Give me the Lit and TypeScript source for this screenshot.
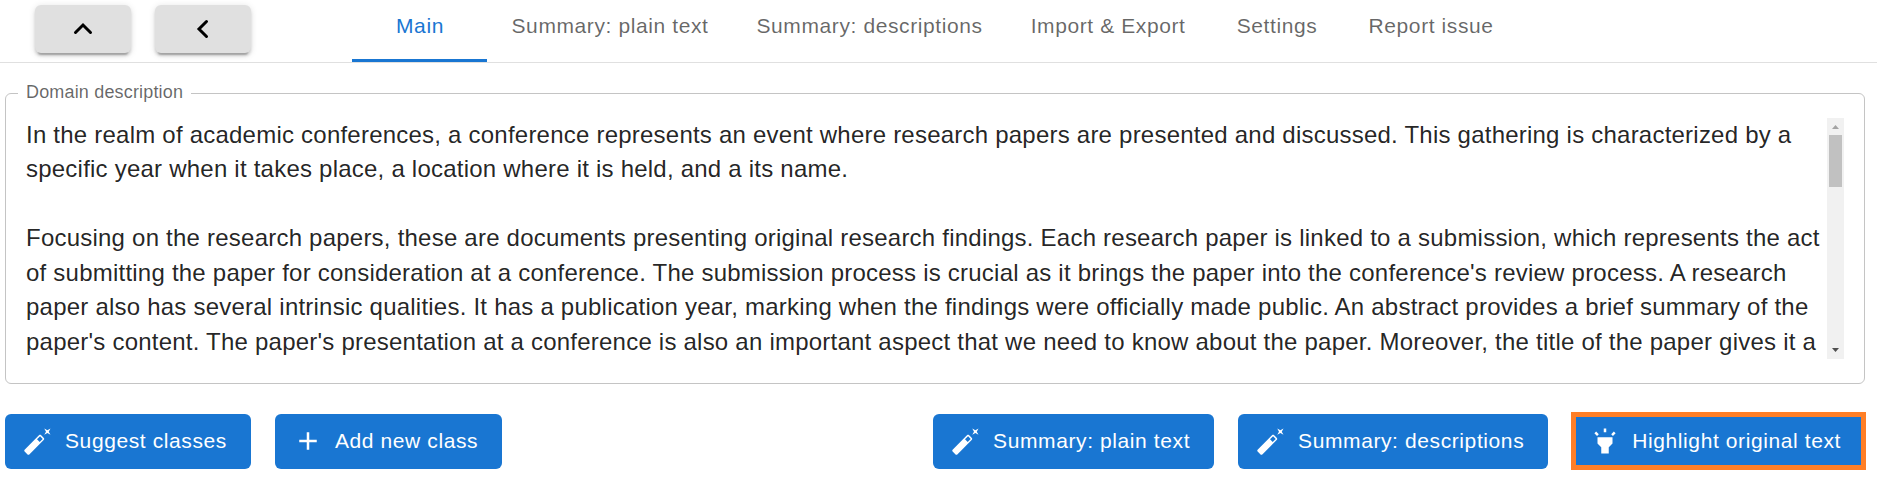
import { LitElement, html, css, svg } from "lit";
import { customElement, property } from "lit/decorators.js";

const ICONS: Record<string, string> = {
  wand: "m22 2-2.5 1.4L17 2l1.4 2.5L17 7l2.5-1.4L22 7l-1.4-2.5zm-7.63 5.29c-.39-.39-1.02-.39-1.41 0L1.29 18.96c-.39.39-.39 1.02 0 1.41l2.34 2.34c.39.39 1.02.39 1.41 0L16.7 11.05c.39-.39.39-1.02 0-1.41zm-1.03 5.49-2.12-2.12 2.44-2.44 2.12 2.12z",
  add: "M19 13h-6v6h-2v-6H5v-2h6V5h2v6h6z",
  torch: "m6 14 3 3v5h6v-5l3-3V9H6zm5-12h2v3h-2zM3.5 5.875 4.914 4.46l2.12 2.122L5.62 7.997zm13.46.71 2.123-2.12 1.414 1.414L18.375 8z",
};

@customElement("action-button")
class ActionButton extends LitElement {
  @property() icon = "wand";
  static styles = css`
    :host { display: block; }
    .button {
      display: flex; align-items: center; box-sizing: border-box; height: 55px;
      padding: 0 24px 0 18px; border: 0; border-radius: 6px; background: #1976d2; color: #fff;
      font: 400 21px/36.75px "Liberation Sans", Arial, sans-serif; letter-spacing: 0.6px; white-space: nowrap;
    }
    .icon { width: 30px; height: 30px; margin: 0 12px 1px 0; fill: currentColor; }
  `;
  render() {
    return html`<button class="button">
      <svg class="icon" viewBox="0 0 24 24">${svg`<path fill-rule="evenodd" d=${ICONS[this.icon]}></path>`}</svg><slot></slot>
    </button>`;
  }
}

const TABS = ["Main", "Summary: plain text", "Summary: descriptions", "Import & Export", "Settings", "Report issue"];

const LINES = [
  "In the realm of academic conferences, a conference represents an event where research papers are presented and discussed. This gathering is characterized by a",
  "specific year when it takes place, a location where it is held, and a its name.",
  "",
  "Focusing on the research papers, these are documents presenting original research findings. Each research paper is linked to a submission, which represents the act",
  "of submitting the paper for consideration at a conference. The submission process is crucial as it brings the paper into the conference's review process. A research",
  "paper also has several intrinsic qualities. It has a publication year, marking when the findings were officially made public. An abstract provides a brief summary of the",
  "paper's content. The paper's presentation at a conference is also an important aspect that we need to know about the paper. Moreover, the title of the paper gives it a",
];

@customElement("app-root")
class AppRoot extends LitElement {
  static styles = css`
    :host {
      display: block; height: 481px; overflow: hidden; background: #fff;
      font-family: "Liberation Sans", Arial, sans-serif; color: rgba(0, 0, 0, 0.87);
    }
    .header {
      display: flex; box-sizing: border-box; height: 63px; padding-left: 35px;
      border-bottom: 1px solid #e0e0e0;
    }
    .nav { display: flex; gap: 24px; padding-top: 5px; width: 317px; }
    .nav-button {
      display: flex; align-items: center; justify-content: center; width: 96px; height: 48px;
      padding: 0; border: 0; border-radius: 6px; background: #e0e0e0;
      box-shadow: 0 4.5px 1.5px -3px rgba(0, 0, 0, 0.2), 0 3px 3px rgba(0, 0, 0, 0.14), 0 1.5px 7.5px rgba(0, 0, 0, 0.12);
    }
    .chevron { width: 24px; height: 24px; fill: none; stroke: #000; stroke-width: 3; stroke-linecap: round; }
    .tabs { display: flex; }
    .tab {
      box-sizing: border-box; min-width: 135px; height: 62px; padding: 13px 23.5px 0 24.5px;
      text-align: center; font-size: 21px; line-height: 26.25px; letter-spacing: 0.6px;
      color: rgba(0, 0, 0, 0.6); white-space: nowrap;
    }
    .tab.active { color: #1976d2; border-bottom: 3px solid #1976d2; }
    .field {
      display: flex; box-sizing: border-box; width: 1860px; height: 301px; margin: 20px 0 0 5px;
      padding: 15px 20px 24px 20px; min-width: 0;
      border: 1px solid #c4c4c4; border-radius: 6px;
    }
    .legend {
      padding: 0 9px 0 8px; margin-left: -8px; width: 155.5px; height: 20px;
      font-size: 18px; line-height: 18px; letter-spacing: 0.17px;
      color: rgba(0, 0, 0, 0.6); white-space: nowrap;
    }
    .content { display: flex; width: 1818px; height: 241px; }
    .text { flex: 1; margin-top: -0.3px; font-size: 24px; line-height: 34.5px; letter-spacing: 0.225px; white-space: pre; overflow: hidden; }
    .line { height: 34.5px; }
    .scrollbar { display: flex; flex-direction: column; align-items: center; width: 17px; background: #f1f1f1; }
    .arrow { width: 17px; height: 17px; fill: #a3a3a3; }
    .arrow.down { fill: #505050; margin-top: auto; }
    .thumb { width: 13px; height: 52px; background: #c1c1c1; }
    .actions { display: flex; justify-content: space-between; width: 1860px; margin: 30px 0 0 5px; }
    .group { display: flex; gap: 24px; }
    .marked { position: relative; }
    .marked::after { content: ""; position: absolute; inset: -2px -1px -1px -1px; border: 5px solid #ff7f27; }
  `;
  render() {
    return html`
      <div class="header">
        <div class="nav">
          <button class="nav-button"><svg class="chevron" viewBox="0 0 24 24"><path d="M4.5 15.5 12 8l7.5 7.5"></path></svg></button>
          <button class="nav-button"><svg class="chevron" viewBox="0 0 24 24"><path d="M15.5 4.5 8 12l7.5 7.5"></path></svg></button>
        </div>
        <div class="tabs">
          ${TABS.map((t, i) => html`<div class="tab ${i === 0 ? "active" : ""}">${t}</div>`)}
        </div>
      </div>
      <fieldset class="field">
        <legend class="legend">Domain description</legend>
        <div class="content">
          <div class="text">${LINES.map((l) => html`<div class="line">${l}</div>`)}</div>
          <div class="scrollbar">
            <svg class="arrow" viewBox="0 0 17 17"><path d="M5 11 8.5 7 12 11z"></path></svg>
            <div class="thumb"></div>
            <svg class="arrow down" viewBox="0 0 17 17"><path d="M5 6 8.5 10 12 6z"></path></svg>
          </div>
        </div>
      </fieldset>
      <div class="actions">
        <div class="group">
          <action-button>Suggest classes</action-button>
          <action-button icon="add">Add new class</action-button>
        </div>
        <div class="group">
          <action-button>Summary: plain text</action-button>
          <action-button>Summary: descriptions</action-button>
          <action-button class="marked" icon="torch">Highlight original text</action-button>
        </div>
      </div>
    `;
  }
}
